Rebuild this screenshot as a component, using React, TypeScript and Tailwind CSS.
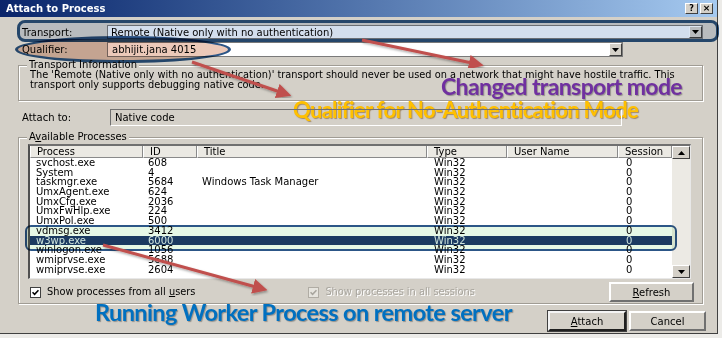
import React from 'react';

const ui = "font-['DejaVu_Sans',sans-serif] text-[10px] text-black";

const rows: [string, string, string][] = [
  ['svchost.exe', '608', ''],
  ['System', '4', ''],
  ['taskmgr.exe', '5684', 'Windows Task Manager'],
  ['UmxAgent.exe', '624', ''],
  ['UmxCfg.exe', '2036', ''],
  ['UmxFwHlp.exe', '224', ''],
  ['UmxPol.exe', '500', ''],
  ['vdmsg.exe', '3412', ''],
  ['w3wp.exe', '6000', ''],
  ['winlogon.exe', '1056', ''],
  ['wmiprvse.exe', '5688', ''],
  ['wmiprvse.exe', '2604', ''],
];

function DropButton() {
  return (
    <div className="w-[13px] h-full bg-[#d4d0c8] border border-t-white border-l-white border-r-[#404040] border-b-[#404040] flex items-center justify-center">
      <svg width="7" height="4" viewBox="0 0 7 4">
        <path d="M0 0h7L3.5 4z" fill="#000" />
      </svg>
    </div>
  );
}

function Check({ disabled }: { disabled?: boolean }) {
  return (
    <div
      className={`w-[11px] h-[11px] border flex items-center justify-center ${
        disabled ? 'bg-[#e6e4de] border-[#b0aca4]' : 'bg-white border-[#404040]'
      }`}
    >
      <svg width="7" height="7" viewBox="0 0 7 7">
        <path d="M0.5 3.2 2.6 5.3 6.5 1.2" stroke={disabled ? '#a8a59e' : '#000'} strokeWidth="1.6" fill="none" />
      </svg>
    </div>
  );
}

function Button({ label, ul, def, w }: { label: string; ul?: number; def?: boolean; w: string }) {
  return (
    <div
      className={`${w} h-full bg-[#d4d0c8] flex items-center justify-center ${
        def
          ? 'border-2 border-t-[#f4f4f4] border-l-[#f4f4f4] border-r-[#202020] border-b-[#202020] outline outline-1 outline-[#404040]'
          : 'border-2 border-t-white border-l-white border-r-[#707070] border-b-[#707070]'
      }`}
    >
      {ul !== undefined ? (
        <span>
          {label.slice(0, ul)}
          <span className="underline">{label[ul]}</span>
          {label.slice(ul + 1)}
        </span>
      ) : (
        label
      )}
    </div>
  );
}

function Arrow({ x1, y1, x2, y2 }: { x1: number; y1: number; x2: number; y2: number }) {
  return (
    <line x1={x1} y1={y1} x2={x2} y2={y2} stroke="#c0504d" strokeWidth="3" markerEnd="url(#head)" filter="url(#sh)" />
  );
}

export default function App() {
  return (
    <div className={`w-[722px] h-[338px] relative overflow-hidden bg-[#ecebe8] ${ui}`}>
      <div className="w-[718px] h-[334px] bg-[#d4d0c8] border-r border-b border-[#404040] flex flex-col">
        {/* title bar */}
        <div className="h-[17px] flex items-center justify-between bg-gradient-to-r from-[#0a246a] to-[#a6caf0] pl-[6px] pr-[4px]">
          <span className="font-bold text-white text-[10px]">Attach to Process</span>
          <div className="flex gap-[2px]">
            <div className="w-[13px] h-[11px] bg-[#d4d0c8] border border-t-white border-l-white border-r-[#404040] border-b-[#404040] flex items-center justify-center text-[8px] font-bold leading-none">
              ?
            </div>
            <div className="w-[13px] h-[11px] bg-[#d4d0c8] border border-t-white border-l-white border-r-[#404040] border-b-[#404040] flex items-center justify-center text-[9px] font-bold leading-none">
              ×
            </div>
          </div>
        </div>

        <div className="pl-[18px] pr-[14px] flex flex-col">
          {/* transport */}
          <div className="mt-[8px] h-[14px] flex items-center">
            <span className="w-[89px] pl-[4px]">Transport:</span>
            <div className="flex-1 h-full bg-[#f4f6fa] border border-[#7a7a7a] flex items-center justify-between">
              <span className="pl-[3px]">Remote (Native only with no authentication)</span>
              <DropButton />
            </div>
          </div>

          {/* qualifier */}
          <div className="mt-[3px] h-[15px] flex items-center">
            <span className="w-[89px] pl-[4px]">Qualifier:</span>
            <div className="w-[516px] h-full bg-white border border-[#7a7a7a] flex items-center justify-between">
              <span className="pl-[4px]">abhijit.jana 4015</span>
              <DropButton />
            </div>
          </div>

          {/* transport information */}
          <div className="mt-[8px] h-[36px] border border-[#a09c94] shadow-[inset_1px_1px_0_#fff,1px_1px_0_#fff]">
            <span className="block w-fit -mt-[7px] ml-[8px] px-[2px] bg-[#d4d0c8] leading-[12px]">Transport Information</span>
            <p className="pl-[11px] leading-[10px] text-[9.8px] -mt-[1px] whitespace-nowrap">
              The 'Remote (Native only with no authentication)' transport should never be used on a network that might have hostile traffic. This
              <br />
              transport only supports debugging native code.
            </p>
          </div>

          {/* attach to */}
          <div className="mt-[8px] h-[17px] flex items-center">
            <span className="w-[92px] pl-[4px]">Attach to:</span>
            <div className="relative z-30 w-[512px] h-full border border-t-[#707070] border-l-[#707070] border-r-white border-b-white flex items-center">
              <span className="pl-[4px]">Native code</span>
            </div>
          </div>

          {/* available processes */}
          <div className="mt-[11px] h-[167px] border border-[#a09c94] shadow-[inset_1px_1px_0_#fff,1px_1px_0_#fff] flex flex-col">
            <span className="block w-fit -mt-[7px] ml-[8px] px-[2px] bg-[#d4d0c8] leading-[12px]">
              A<span className="underline">v</span>ailable Processes
            </span>
            <div className="mt-[1px] ml-[9px] w-[663px] h-[135px] bg-white border-l-2 border-t-2 border-l-[#505050] border-t-[#707070] border-r border-b border-r-[#e8e8e8] border-b-[#e8e8e8] flex">
              <div className="flex-1 flex flex-col">
                <div className="h-[12px] grid grid-cols-[113px_54px_230px_80px_111px_1fr] bg-[#ebe9e3]">
                  {['Process', 'ID', 'Title', 'Type', 'User Name', 'Session'].map((h) => (
                    <div key={h} className="pl-[6px] leading-[11px] border-r border-b border-r-[#8a8a8a] border-b-[#8a8a8a] border-l border-l-white">
                      {h}
                    </div>
                  ))}
                </div>
                {rows.map(([p, id, t], i) => {
                  const sel = p === 'w3wp.exe';
                  return (
                    <div
                      key={i}
                      className={`h-[9.7px] leading-[9.7px] grid grid-cols-[113px_54px_230px_80px_111px_1fr] ${
                        sel ? 'bg-[#1d3b6b] text-[#e6ecf5]' : ''
                      }`}
                    >
                      <span className="pl-[6px]">{p}</span>
                      <span className="pl-[5px]">{id}</span>
                      <span className="pl-[5px]">{t}</span>
                      <span className="pl-[7px]">Win32</span>
                      <span />
                      <span className="pl-[8px]">0</span>
                    </div>
                  );
                })}
              </div>
              <div className="w-[18px] bg-[#eceae4] flex flex-col justify-between">
                <div className="h-[13px] bg-[#d4d0c8] border border-t-white border-l-white border-r-[#404040] border-b-[#404040] flex items-center justify-center">
                  <svg width="7" height="4" viewBox="0 0 7 4">
                    <path d="M0 4h7L3.5 0z" fill="#000" />
                  </svg>
                </div>
                <div className="h-[13px] bg-[#d4d0c8] border border-t-white border-l-white border-r-[#404040] border-b-[#404040] flex items-center justify-center">
                  <svg width="7" height="4" viewBox="0 0 7 4">
                    <path d="M0 0h7L3.5 4z" fill="#000" />
                  </svg>
                </div>
              </div>
            </div>
            <div className="mt-[3px] h-[20px] flex items-center pl-[11px] pr-[8px]">
              <Check />
              <span className="ml-[6px] text-[9.8px]">
                Show processes from all <span className="underline">u</span>sers
              </span>
              <div className="ml-[113px] flex items-center">
                <Check disabled />
                <span className="ml-[6px] text-[9.8px] text-[#a8a59e] [text-shadow:1px_1px_0_#fff]">Show processes in all sessions</span>
              </div>
              <div className="ml-auto h-full">
                <Button label="Refresh" ul={0} w="w-[85px]" />
              </div>
            </div>
          </div>

          {/* buttons */}
          <div className="mt-[7px] h-[20px] flex justify-end gap-[3px] -mr-[3px]">
            <Button label="Attach" ul={0} def w="w-[78px]" />
            <Button label="Cancel" w="w-[77px]" />
          </div>
        </div>
      </div>

      {/* highlight overlays */}
      <div className="absolute left-[17px] top-[20px] w-[702px] h-[22px] rounded-[8px] border-[3px] border-[#2c5687] bg-[#dde6f2] mix-blend-multiply z-10" />
      <div className="absolute left-[15px] top-[36px] w-[216px] h-[27px] rounded-[50%] border-[3px] border-[#2c5687] bg-[#ecc9b9] mix-blend-multiply z-10" />
      <div className="absolute left-[25px] top-[225px] w-[652px] h-[26px] rounded-[6px] border-2 border-[#2c5687] bg-[#e6f8e6] mix-blend-multiply z-10" />

      {/* arrows */}
      <svg className="absolute inset-0 z-20 pointer-events-none" width="722" height="338" viewBox="0 0 722 338">
        <defs>
          <marker id="head" markerWidth="5" markerHeight="5" refX="1" refY="2.5" orient="auto" markerUnits="strokeWidth">
            <path d="M0 0 5 2.5 0 5z" fill="#c0504d" />
          </marker>
          <filter id="sh" x="-10%" y="-10%" width="130%" height="130%">
            <feDropShadow dx="1" dy="1.5" stdDeviation="1" floodColor="#000" floodOpacity="0.35" />
          </filter>
        </defs>
        <Arrow x1={362} y1={40} x2={472} y2={63} />
        <Arrow x1={192} y1={62} x2={280} y2={92} />
        <Arrow x1={103} y1={245} x2={256} y2={287} />
      </svg>

      {/* callout texts */}
      <span className="absolute left-[441px] top-[75px] z-20 font-['Lato',sans-serif] font-bold text-[23px] leading-none tracking-[-0.6px] text-[#7030a0] [text-shadow:1px_1px_1px_rgba(0,0,0,0.3)] whitespace-nowrap">
        Changed transport mode
      </span>
      <span className="absolute left-[293px] top-[99px] z-20 font-['Lato',sans-serif] font-bold text-[22px] leading-none tracking-[-0.7px] text-[#ffc000] [text-shadow:1px_1px_1px_rgba(120,70,0,0.5)] whitespace-nowrap">
        Qualifier for No-Authentication Mode
      </span>
      <span className="absolute left-[95px] top-[301px] z-20 font-['Lato',sans-serif] font-bold text-[23.5px] leading-none tracking-[-0.6px] text-[#0070c0] [text-shadow:1px_1px_1px_rgba(0,0,0,0.3)] whitespace-nowrap">
        Running Worker Process on remote server
      </span>
    </div>
  );
}
